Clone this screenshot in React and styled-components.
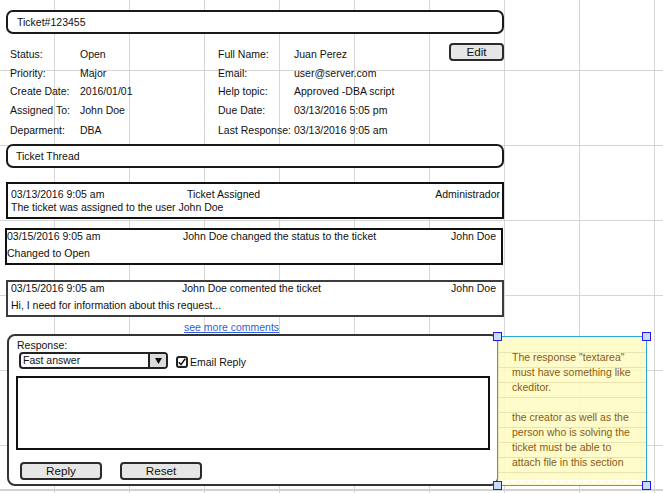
import React from "react"
import styled, { createGlobalStyle } from "styled-components"

const GlobalStyle = createGlobalStyle`
  html, body {
    margin: 0;
    padding: 0;
  }
  body {
    width: 663px;
    height: 493px;
    overflow: hidden;
    font-family: "Liberation Sans", Arial, sans-serif;
    font-size: 10.5px;
    color: #111;
    background-color: #fff;
    background-image:
      linear-gradient(to right, #d6d6d6 1px, transparent 1px),
      linear-gradient(to bottom, #d6d6d6 1px, transparent 1px);
    background-size: 75px 75px;
    background-position: 54px 70px;
  }
`

const Page = styled.div`
  padding: 10px 0 0 6px;
  width: 663px;
  box-sizing: border-box;
`

const Column = styled.div`
  width: 498px;
  display: flex;
  flex-direction: column;
`

const TitleBar = styled.div`
  box-sizing: border-box;
  height: 24px;
  border: 2px solid #1a1a1a;
  border-radius: 7px;
  background: #fff;
  display: flex;
  align-items: center;
  padding-left: ${(p) => p.$indent || 9}px;
  margin-top: ${(p) => p.$top || 0}px;
`

const InfoGrid = styled.div`
  display: grid;
  grid-template-columns: 70px 138px 76px 1fr 55px;
  grid-template-rows: 21px 18px 17px 21px 19px;
  align-items: center;
  margin: 9px 0 0 4px;
`

const Cell = styled.span`
  white-space: nowrap;
  grid-row: ${(p) => p.$row};
  grid-column: ${(p) => p.$col};
`

const Button = styled.button`
  box-sizing: border-box;
  width: ${(p) => p.$w || 82}px;
  height: 18px;
  padding: 0;
  background: #e6e6e6;
  border: 2px solid #2a2a2a;
  border-radius: 4px;
  font-family: "Liberation Sans", Arial, sans-serif;
  font-size: 11.7px;
  color: #111;
  line-height: 14px;
`

const EditButton = styled(Button)`
  align-self: start;
  grid-column: 5;
  grid-row: 1;
`

const Entry = styled.div`
  box-sizing: border-box;
  height: 37px;
  width: 498px;
  margin-top: ${(p) => p.$top}px;
  margin-left: ${(p) => p.$shift || 0}px;
  border: 2px solid ${(p) => p.$line || "#111"};
  background: #fff;
  padding: ${(p) => p.$pad}px ${(p) => p.$right}px 0 ${(p) => p.$left}px;
  display: grid;
  grid-template-columns: ${(p) => p.$dateW}px 1fr auto;
  grid-template-rows: ${(p) => p.$lh}px auto;
  row-gap: ${(p) => p.$gap}px;
  line-height: ${(p) => p.$lh}px;
`

const EntryBody = styled.div`
  grid-column: 1 / -1;
  white-space: nowrap;
`

const MoreLink = styled.a`
  color: #3060e0;
  text-decoration: underline;
  line-height: 14px;
  margin: 3px 0 0 178px;
  align-self: flex-start;
`

const ResponseRow = styled.div`
  display: flex;
  align-items: flex-start;
  margin-left: 1px;
  width: 660px;
`

const Panel = styled.div`
  flex-shrink: 0;
  box-sizing: border-box;
  width: 492px;
  height: 152px;
  border: 2px solid #333;
  border-radius: 8px;
  background: #fff;
  padding: 3px 8px 4px 0;
  display: flex;
  flex-direction: column;
`

const FieldLabel = styled.div`
  line-height: 12px;
  padding-left: 8px;
`

const Controls = styled.div`
  display: flex;
  align-items: flex-start;
  gap: 8px;
  margin: 1px 0 0 10px;
`

const Select = styled.div`
  box-sizing: border-box;
  width: 149px;
  height: 17px;
  border: 2px solid #222;
  border-radius: 4px;
  display: flex;
  overflow: hidden;
`

const SelectText = styled.span`
  flex: 1;
  padding-left: 2px;
  line-height: 12px;
`

const SelectArrow = styled.span`
  width: 16px;
  background: #dcdcdc;
  border-left: 2px solid #222;
  display: flex;
  align-items: center;
  justify-content: center;
`

const CheckWrap = styled.label`
  display: flex;
  align-items: center;
  margin-top: 4px;
  gap: 2px;
  line-height: 12px;
`

const CheckBox = styled.span`
  box-sizing: border-box;
  width: 12px;
  height: 12px;
  border: 2px solid #222;
  border-radius: 3px;
  display: flex;
  align-items: center;
  justify-content: center;
`

const TextArea = styled.div`
  box-sizing: border-box;
  width: 474px;
  height: 74px;
  border: 2px solid #111;
  margin: 7px 0 0 7px;
`

const ButtonRow = styled.div`
  display: flex;
  gap: 18px;
  margin: 12px 0 0 11px;
`

const Note = styled.div`
  flex-shrink: 0;
  position: relative;
  z-index: 1;
  box-sizing: border-box;
  width: 150px;
  height: 150px;
  margin: 2px 0 0 -2px;
  border: 1px solid #2aa6de;
  background-color: rgba(255, 252, 196, 0.88);
  background-image: repeating-linear-gradient(
    to bottom,
    transparent 0 14px,
    rgba(225, 218, 160, 0.7) 14px 15px
  );
  background-position: 0 1px;
  padding: 13px 4px 0 14px;
  color: #8a5a12;
  line-height: 15px;
  white-space: nowrap;

  &::after {
    content: "";
    position: absolute;
    left: 0;
    right: 0;
    bottom: 0;
    height: 5px;
    background-image:
      linear-gradient(135deg, #fff 35%, transparent 35%),
      linear-gradient(225deg, #fff 35%, transparent 35%);
    background-size: 8px 5px;
    background-position: bottom left;
    opacity: 0.9;
  }
`

const NoteLine = styled.div`
  min-height: 15px;
`

const Handle = styled.span`
  position: absolute;
  z-index: 2;
  width: 9px;
  height: 9px;
  box-sizing: border-box;
  background: #c8dcff;
  border: 1.5px solid #2a18f0;
  ${(p) => (p.$top ? "top: -5px;" : "bottom: -5px;")}
  ${(p) => (p.$left ? "left: -5px;" : "right: -5px;")}
`

const BottomRule = styled.div`
  height: 2px;
  background: #d2d2d2;
  margin-top: 3px;
  width: 663px;
`

const info = [
  ["Status:", "Open", "Full Name:", "Juan Perez"],
  ["Priority:", "Major", "Email:", "user@server.com"],
  ["Create Date:", "2016/01/01", "Help topic:", "Approved -DBA script"],
  ["Assigned To:", "John Doe", "Due Date:", "03/13/2016 5:05 pm"],
  ["Deparment:", "DBA", "Last Response:", "03/13/2016 9:05 am"],
]

const entries = [
  {
    date: "03/13/2016 9:05 am",
    title: "Ticket Assigned",
    who: "Administrador",
    body: "The ticket was assigned to the user John Doe",
    style: { $top: 14, $pad: 4, $left: 3, $right: 2, $dateW: 176, $lh: 13, $gap: 0 },
  },
  {
    date: "03/15/2016 9:05 am",
    title: "John Doe changed the status to the ticket",
    who: "John Doe",
    body: "Changed to Open",
    style: { $top: 9, $shift: -1, $pad: 0, $left: 0, $right: 5, $dateW: 176, $lh: 12, $gap: 5 },
  },
  {
    date: "03/15/2016 9:05 am",
    title: "John Doe comented the ticket",
    who: "John Doe",
    body: "Hi, I need for information about this request...",
    style: { $top: 15, $pad: 0, $left: 3, $right: 6, $dateW: 171, $lh: 12, $gap: 5, $line: "#3c3c3c" },
  },
]

const App = () => {
  return (
    <>
      <GlobalStyle />
      <Page>
        <Column>
          <TitleBar>Ticket#123455</TitleBar>
          <InfoGrid>
            {info.map((row, i) =>
              row.map((text, j) => (
                <Cell key={`${i}-${j}`} $row={i + 1} $col={j + 1}>
                  {text}
                </Cell>
              ))
            )}
            <EditButton $w={55}>Edit</EditButton>
          </InfoGrid>
          <TitleBar $top={5} $indent={8}>Ticket Thread</TitleBar>

          {entries.map((e, i) => (
            <Entry key={i} {...e.style}>
              <span>{e.date}</span>
              <span>{e.title}</span>
              <span>{e.who}</span>
              <EntryBody>{e.body}</EntryBody>
            </Entry>
          ))}

          <MoreLink href="#">see more comments</MoreLink>

          <ResponseRow>
            <Panel>
              <FieldLabel>Response:</FieldLabel>
              <Controls>
                <Select>
                  <SelectText>Fast answer</SelectText>
                  <SelectArrow>
                    <svg width="7" height="6" viewBox="0 0 7 6">
                      <polygon points="0,0 7,0 3.5,6" fill="#111" />
                    </svg>
                  </SelectArrow>
                </Select>
                <CheckWrap>
                  <CheckBox>
                    <svg width="8" height="8" viewBox="0 0 8 8">
                      <path d="M0.8 4.2 L3 6.6 L7.2 0.8" fill="none" stroke="#111" strokeWidth="1.5" />
                    </svg>
                  </CheckBox>
                  Email Reply
                </CheckWrap>
              </Controls>
              <TextArea />
              <ButtonRow>
                <Button>Reply</Button>
                <Button>Reset</Button>
              </ButtonRow>
            </Panel>
            <Note>
              <Handle $top $left />
              <Handle $top />
              <Handle $left />
              <Handle />
              <NoteLine>The response "textarea"</NoteLine>
              <NoteLine>must have something like</NoteLine>
              <NoteLine>ckeditor.</NoteLine>
              <NoteLine />
              <NoteLine>the creator as well as the</NoteLine>
              <NoteLine>person who is solving the</NoteLine>
              <NoteLine>ticket must be able to</NoteLine>
              <NoteLine>attach file in this section</NoteLine>
            </Note>
          </ResponseRow>
        </Column>
      </Page>
      <BottomRule />
    </>
  )
}

export default App
